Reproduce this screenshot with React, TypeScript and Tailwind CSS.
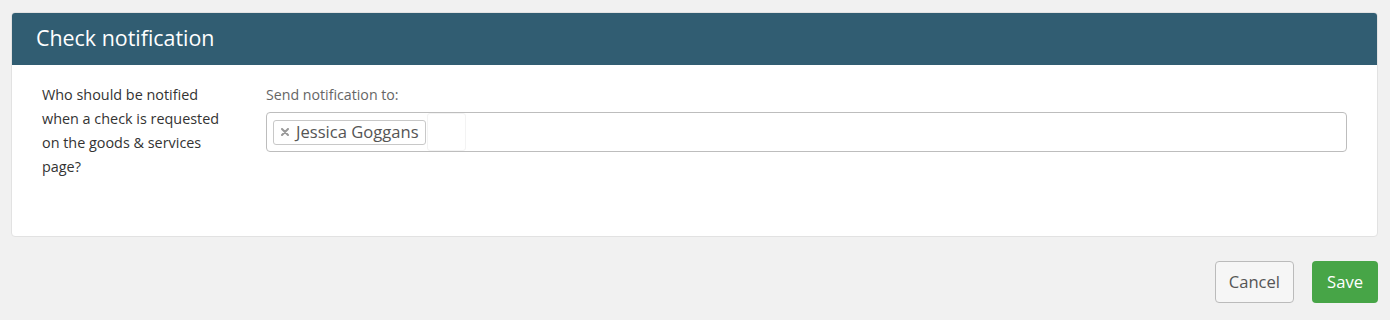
import React from "react";

export default function App() {
  return (
    <div className="w-[1390px] h-[320px] bg-[#f1f1f1] pt-3 pl-[11px] pr-[12px] [font-family:'Open_Sans',sans-serif]">
      <div className="bg-white rounded border border-[#e2e2e2] h-[225px] overflow-hidden">
        <div className="h-[52px] bg-[#315d72] flex items-center pl-[24px] pb-[2px]">
          <h1 className="text-[21.4px] text-white leading-none">Check notification</h1>
        </div>
        <div className="flex pt-[18px] pl-[30px] pr-[30px]">
          <div className="w-[224px] shrink-0 pr-8 text-[14.4px] leading-[24px] text-[#333]">
            Who should be notified when a check is requested on the goods &amp; services page?
          </div>
          <div className="flex-1">
            <div className="text-[14.2px] leading-[18px] text-[#666] mt-[3px]">Send notification to:</div>
            <div className="mt-[8px] h-[40px] border border-[#bdbdbd] rounded-[4px] flex items-center pl-[6px]">
              <div className="h-[25px] border border-[#c8c8c8] rounded-[3px] flex items-center pl-[7px] pr-[6px] gap-[7px] text-[16.6px] text-[#555]">
                <svg width="8" height="8" viewBox="0 0 8 8" className="shrink-0">
                  <path d="M1 1 L7 7 M7 1 L1 7" stroke="#999" strokeWidth="2" strokeLinecap="round" />
                </svg>
                <span className="leading-none">Jessica Goggans</span>
              </div>
              <div className="ml-[1px] w-[39px] h-[38px] border border-[#f3f3f3] rounded-[3px]"></div>
            </div>
          </div>
        </div>
      </div>
      <div className="flex justify-end gap-[18px] mt-[24px]">
        <button className="h-[42px] px-[13px] border border-[#bbb] rounded-[4px] bg-[#f6f6f6] text-[#555] text-[16.6px]">Cancel</button>
        <button className="h-[42px] px-[15px] rounded-[4px] bg-[#47a547] text-white text-[16.6px]">Save</button>
      </div>
    </div>
  );
}
